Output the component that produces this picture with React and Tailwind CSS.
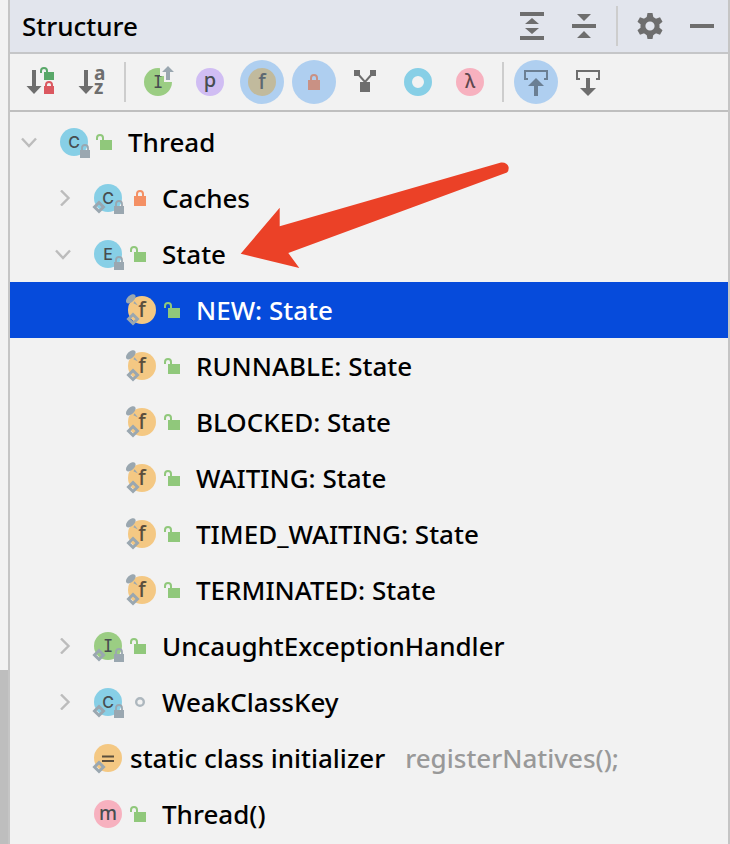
import { useState } from "react";
import clsx from "clsx";

const COLORS = {
  blue: "#87cfe6",
  green: "#9bcd83",
  amber: "#f4c883",
  pink: "#f7b1bf",
  purple: "#d0bdf3",
};

const NODES = [
  { name: "Thread", level: 0, arrow: "down", letter: "C", color: "blue", locked: true, access: "public" },
  { name: "Caches", level: 1, arrow: "right", letter: "C", color: "blue", locked: true, isStatic: true, access: "private" },
  { name: "State", level: 1, arrow: "down", letter: "E", color: "blue", locked: true, access: "public" },
  { name: "NEW: State", level: 2, letter: "f", color: "amber", pinned: true, isStatic: true, access: "public" },
  { name: "RUNNABLE: State", level: 2, letter: "f", color: "amber", pinned: true, isStatic: true, access: "public" },
  { name: "BLOCKED: State", level: 2, letter: "f", color: "amber", pinned: true, isStatic: true, access: "public" },
  { name: "WAITING: State", level: 2, letter: "f", color: "amber", pinned: true, isStatic: true, access: "public" },
  { name: "TIMED_WAITING: State", level: 2, letter: "f", color: "amber", pinned: true, isStatic: true, access: "public" },
  { name: "TERMINATED: State", level: 2, letter: "f", color: "amber", pinned: true, isStatic: true, access: "public" },
  { name: "UncaughtExceptionHandler", level: 1, arrow: "right", letter: "I", color: "green", locked: true, isStatic: true, access: "public" },
  { name: "WeakClassKey", level: 1, arrow: "right", letter: "C", color: "blue", locked: true, isStatic: true, access: "package" },
  { name: "static class initializer", hint: "registerNatives();", level: 1, letter: "=", color: "amber", isStatic: true },
  { name: "Thread()", level: 1, letter: "m", color: "pink", access: "public" },
];

// font, size and baseline of the glyph inside the 32px badge
const LETTERS = {
  C: { size: 16, y: 22, font: "font-['Inter',sans-serif] font-medium" },
  E: { size: 16, y: 22, font: "font-['Inter',sans-serif] font-medium" },
  I: { size: 17, y: 22, font: "font-['DejaVu_Sans_Mono',monospace]" },
  f: { size: 21, y: 23, font: "font-['Noto_Sans',sans-serif]" },
  p: { size: 20, y: 21, font: "font-['Noto_Sans',sans-serif]" },
  m: { size: 19, y: 22, font: "font-['Noto_Sans',sans-serif]" },
  λ: { size: 19, y: 22, font: "font-['Noto_Sans',sans-serif]" },
};

function Letter({ children, fill = "#474d50" }) {
  const { size, y, font } = LETTERS[children];

  return (
    <text x="16" y={y} textAnchor="middle" fill={fill} fontSize={size} className={font}>
      {children}
    </text>
  );
}

function NodeIcon({ node }) {
  return (
    <svg viewBox="0 0 32 32" className="size-8 shrink-0 overflow-visible" aria-hidden="true">
      <circle cx="16" cy="16" r="14" fill={COLORS[node.color]} />
      {node.letter === "=" ? (
        <path d="M10 14.5h12M10 19h12" stroke="#5b4e3c" strokeWidth="1.8" />
      ) : (
        <Letter fill={node.color === "amber" ? "#5b4e3c" : undefined}>{node.letter}</Letter>
      )}
      {node.pinned && (
        <g fill="#9aa7b0">
          <ellipse cx="4.8" cy="4.8" rx="5.8" ry="3.3" transform="rotate(-42 4.8 4.8)" />
          <path d="M8.6 7.2 12 11.6 7.4 9.2Z" />
        </g>
      )}
      {node.isStatic && (
        <path d="M7 20.5 11.5 25 7 29.5 2.5 25Z" fill="none" stroke="#9aa7b0" strokeWidth="3" />
      )}
      {node.locked && (
        <g>
          <path d="M24 25v-3a3 3 0 0 1 6 0v3" fill="none" stroke="#9aa7b0" strokeWidth="1.8" />
          <path d="M22 24h10v8H22z" fill="#9aa7b0" />
        </g>
      )}
    </svg>
  );
}

function AccessIcon({ access }) {
  return (
    <svg viewBox="0 0 16 16" className="mr-4 size-4 shrink-0" fill="none" aria-hidden="true">
      {access === "public" && (
        <>
          <path d="M4 6h12v10H4z" fill="#90c87b" />
          <path d="M1 6V4a3 3 0 0 1 6 0v3" stroke="#90c87b" strokeWidth="2" />
        </>
      )}
      {access === "private" && (
        <>
          <path d="M4 6h12v10H4z" fill="#f49064" />
          <path d="M7 7V4a3 3 0 0 1 6 0v3" stroke="#f49064" strokeWidth="2" />
        </>
      )}
      {access === "package" && <circle cx="10" cy="8" r="3.8" stroke="#adb7be" strokeWidth="2.4" />}
    </svg>
  );
}

function TreeRow({ node, selected, onSelect }) {
  return (
    <li
      role="treeitem"
      aria-level={node.level + 1}
      aria-selected={selected}
      onClick={onSelect}
      className={clsx(
        "flex h-14 cursor-default items-center whitespace-nowrap",
        selected ? "bg-[#064bdb] text-white" : "text-black",
        node.level === 0 && "pl-[11px]",
        node.level === 1 && "pl-[45px]",
        node.level === 2 && "pl-[79px]"
      )}
    >
      {node.arrow ? (
        <button type="button" aria-label={`Toggle ${node.name}`} className="mr-[21px] size-4 shrink-0">
          <svg viewBox="0 0 16 16" className="size-4" fill="none" stroke="#bcbcbc" strokeWidth="2.4">
            <path d={node.arrow === "down" ? "M1 4.5 8 12 15 4.5" : "M6 .5 13.5 8 6 15.5"} />
          </svg>
        </button>
      ) : (
        <span className="mr-[21px] w-4 shrink-0" />
      )}
      <span className="mr-1.5 flex">
        <NodeIcon node={node} />
      </span>
      {node.access && <AccessIcon access={node.access} />}
      <span>{node.name}</span>
      {node.hint && <span className="ml-5 text-[#999999]">{node.hint}</span>}
    </li>
  );
}

function IconButton({ label, active, children }) {
  return (
    <button
      type="button"
      aria-label={label}
      title={label}
      className={clsx(
        "flex size-11 shrink-0 items-center justify-center rounded-full",
        active && "bg-[#afcff0]"
      )}
    >
      <svg viewBox="0 0 32 32" className="size-8 overflow-visible" fill="none">
        {children}
      </svg>
    </button>
  );
}

function Divider({ className = "mx-0.5" }) {
  return <span className={clsx("h-10 w-0.5 shrink-0 bg-[#cdcdcd]", className)} />;
}

function Header() {
  return (
    <header className="flex h-[54px] items-center justify-between border-b-2 border-[#c5c6c8] bg-[#e2e5ed] pr-1 pl-3">
      <h1 className="font-medium">Structure</h1>
      <div className="flex items-center gap-2">
        <IconButton label="Expand All">
          <path d="M4 2h24v4H4zM4 26h24v4H4zM16 8l7 6H9zM16 24l7-6H9z" fill="#6e6e6e" />
        </IconButton>
        <IconButton label="Collapse All">
          <path d="M4 14h24v4H4zM9 4h14l-7 7zM9 28h14l-7-7z" fill="#6e6e6e" />
        </IconButton>
        <Divider />
        <IconButton label="Options">
          <g fill="#6e6e6e">
            <path d="M13.5 3h5l1 5h-7zM13.5 29h5l1-5h-7z" />
            <path d="M13.5 3h5l1 5h-7zM13.5 29h5l1-5h-7z" transform="rotate(60 16 16)" />
            <path d="M13.5 3h5l1 5h-7zM13.5 29h5l1-5h-7z" transform="rotate(120 16 16)" />
          </g>
          <circle cx="16" cy="16" r="7.1" stroke="#6e6e6e" strokeWidth="5" />
        </IconButton>
        <IconButton label="Hide">
          <path d="M4 14h24v4H4z" fill="#6e6e6e" />
        </IconButton>
      </div>
    </header>
  );
}

function Toolbar() {
  return (
    <div role="toolbar" className="flex h-[58px] items-center gap-2 border-b-2 border-[#bfbfbf] px-2.5">
      <IconButton label="Sort by Visibility">
        <path d="M6 4h4v16h5.5L8 28 .5 20H6z" fill="#6e6e6e" />
        <path d="M18 6h10v8H18z" fill="#59a869" />
        <path d="M15 7V5a3 3 0 0 1 6 0v2" stroke="#59a869" strokeWidth="2" />
        <path d="M18 20h10v8H18z" fill="#db5860" />
        <path d="M20 21v-2a3 3 0 0 1 6 0v2" stroke="#db5860" strokeWidth="2" />
      </IconButton>
      <IconButton label="Sort Alphabetically">
        <path d="M6 4h4v16h5.5L8 28 .5 20H6z" fill="#6e6e6e" />
        <text fill="#6e6e6e" fontSize="19" className="font-['Noto_Sans',sans-serif] font-bold">
          <tspan x="16" y="14">a</tspan>
          <tspan x="16" y="28">z</tspan>
        </text>
      </IconButton>
      <Divider className="mr-0.5" />
      <IconButton label="Show Inherited">
        <circle cx="16" cy="16" r="14" fill={COLORS.green} />
        <Letter>I</Letter>
        <path d="M18 0h14v16H22v-6h-4z" fill="#f2f2f2" />
        <path d="M26 0l6 6h-4v8h-4V6h-4z" fill="#9aa7b0" />
      </IconButton>
      <IconButton label="Show Properties">
        <circle cx="16" cy="16" r="14" fill={COLORS.purple} />
        <Letter>p</Letter>
      </IconButton>
      <IconButton label="Show Fields" active>
        <circle cx="16" cy="16" r="14" fill="#c1ba9d" />
        <Letter fill="#5d6871">f</Letter>
      </IconButton>
      <IconButton label="Show Non-Public" active>
        <path d="M10 14h12v10H10z" fill="#c99184" />
        <path d="M13 15v-3a3 3 0 0 1 6 0v3" stroke="#c99184" strokeWidth="2" />
      </IconButton>
      <IconButton label="Group by Defining Type">
        <path d="M4 4h6v6H4zM20 4h6v6h-6zM10 16h10v10H10z" fill="#6e6e6e" />
        <path d="M8 8l7 8 7-8" stroke="#6e6e6e" strokeWidth="2" />
      </IconButton>
      <IconButton label="Show Anonymous Classes">
        <circle cx="16" cy="16" r="10" stroke={COLORS.blue} strokeWidth="8" />
      </IconButton>
      <IconButton label="Show Lambdas">
        <circle cx="16" cy="16" r="14" fill={COLORS.pink} />
        <Letter fill="#5e474d">λ</Letter>
      </IconButton>
      <Divider />
      <IconButton label="Autoscroll to Source" active>
        <path d="M8 13H5V5h22v8h-3" stroke="#6b7f93" strokeWidth="2" />
        <path d="M16 12l8 8h-6v10h-4V20H8z" fill="#6b7f93" />
      </IconButton>
      <IconButton label="Autoscroll from Source">
        <path d="M8 13H5V5h22v8h-3" stroke="#6e6e6e" strokeWidth="2" />
        <path d="M14 12h4v10h6l-8 8-8-8h6z" fill="#6e6e6e" />
      </IconButton>
    </div>
  );
}

export default function App() {
  const [selected, setSelected] = useState(3);

  return (
    <div className="flex min-h-screen bg-[#f2f2f2] font-['Noto_Sans',sans-serif] text-[26px] leading-8 font-medium">
      <div className="flex w-2 shrink-0 flex-col justify-end">
        <div className="h-[174px] bg-[#bebebe]" />
      </div>
      <main className="min-w-0 flex-1 overflow-hidden border-x-2 border-[#c5c5c5]">
        <Header />
        <Toolbar />
        <div className="relative pt-0.5">
          <ul role="tree" aria-label="Structure">
            {NODES.map((node, i) => (
              <TreeRow key={i} node={node} selected={i === selected} onSelect={() => setSelected(i)} />
            ))}
          </ul>
          <svg
            viewBox="0 0 270 108"
            className="pointer-events-none absolute top-[50px] left-[230px] h-[108px] w-[270px]"
            aria-hidden="true"
          >
            <path
              d="M.7 91.7 39.7 45.7V64.3L261 .5Q267 0 268.6 5 269 9 267 10.5L48.3 91 59.3 106Z"
              fill="#eb4127"
            />
          </svg>
        </div>
      </main>
    </div>
  );
}
